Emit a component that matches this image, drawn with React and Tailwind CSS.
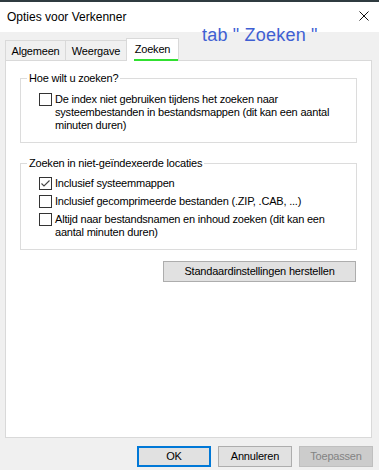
import React from "react";

function Box({ checked }) {
  return (
    <span className="relative w-[13px] h-[13px] shrink-0 border border-[#333333] bg-white flex items-center justify-center">
      {checked && (
        <svg width="11" height="11" viewBox="0 0 11 11" className="block">
          <polyline points="1.5,5.5 4,8 9.5,2.5" fill="none" stroke="#444444" strokeWidth="1.1" />
        </svg>
      )}
    </span>
  );
}

function Row({ checked, lines }) {
  return (
    <div className="flex items-start">
      <Box checked={checked} />
      <div className="ml-[3px] leading-[13px] whitespace-nowrap">
        {lines.map((l, i) => (
          <div key={i}>{l}</div>
        ))}
      </div>
    </div>
  );
}

export default function App() {
  return (
    <div className="relative w-[379px] h-[470px] bg-[#f0f0f0] overflow-hidden font-['Liberation_Sans',Arial,sans-serif] text-[11px] tracking-[-0.2px] text-black flex flex-col">
      <div className="h-[2px] bg-[#2f3b40] shrink-0" />
      <div className="h-[30px] bg-white flex items-center justify-between pl-[7px] pr-[10px] shrink-0">
        <span className="text-[12px] leading-none tracking-normal">Opties voor Verkenner</span>
        <svg width="10" height="10" viewBox="0 0 10 10" className="block -mt-[2px]">
          <path d="M0.5 0.5 L9.5 9.5 M9.5 0.5 L0.5 9.5" stroke="#111" strokeWidth="1" fill="none" />
        </svg>
      </div>

      <div className="absolute left-[202px] top-[26px] text-[18px] leading-[18px] tracking-[0.2px] text-[#3f5fd3] whitespace-nowrap">
        tab " Zoeken "
      </div>

      <div className="mt-[6px] px-[5px] flex items-end h-[22px] shrink-0">
        <div className="w-[61px] h-[20px] border-l border-t border-r border-[#d9d9d9] bg-[#f0f0f0] flex items-center justify-center leading-none pt-[1px]">
          Algemeen
        </div>
        <div className="w-[61px] h-[20px] border-t border-r border-[#d9d9d9] bg-[#f0f0f0] flex items-center justify-center leading-none pt-[1px]">
          Weergave
        </div>
        <div className="relative z-10 -ml-[1px] -mb-[1px] w-[53px] h-[23px] border-l border-t border-r border-[#d9d9d9] bg-white flex items-start justify-center leading-none pt-[5px]">
          Zoeken
          <div className="absolute left-[7px] top-[20px] w-[44px] h-[2px] bg-[#30e030]" />
        </div>
      </div>

      <div className="ml-[5px] mr-[7px] h-[378px] border border-[#d9d9d9] bg-white shrink-0 flex flex-col">
        <fieldset className="mt-[11px] mx-[14px] border border-[#dcdcdc] p-0 pb-[10px]">
          <legend className="ml-[6px] px-[2px] leading-[13px]">Hoe wilt u zoeken?</legend>
          <div className="pt-[8px] pl-[18px]">
            <Row
              lines={[
                "De index niet gebruiken tijdens het zoeken naar",
                "systeembestanden in bestandsmappen (dit kan een aantal",
                "minuten duren)",
              ]}
            />
          </div>
        </fieldset>

        <fieldset className="mt-[14px] mx-[14px] border border-[#dcdcdc] p-0 pb-[10px]">
          <legend className="ml-[6px] px-[2px] leading-[13px]">Zoeken in niet-geïndexeerde locaties</legend>
          <div className="pt-[7px] pl-[18px] flex flex-col gap-[5px]">
            <Row checked lines={["Inclusief systeemmappen"]} />
            <Row lines={["Inclusief gecomprimeerde bestanden (.ZIP, .CAB, ...)"]} />
            <Row
              lines={[
                "Altijd naar bestandsnamen en inhoud zoeken (dit kan een",
                "aantal minuten duren)",
              ]}
            />
          </div>
        </fieldset>

        <div className="mt-[11px] mr-[15px] flex justify-end">
          <button className="w-[193px] h-[21px] border border-[#adadad] bg-[#e1e1e1] text-[11px] leading-none">
            Standaardinstellingen herstellen
          </button>
        </div>
      </div>

      <div className="mt-[8px] pr-[6px] flex justify-end gap-[7px] shrink-0">
        <button className="w-[74px] h-[21px] border-2 border-[#0078d7] bg-[#e1e1e1] text-[11px] leading-none">
          OK
        </button>
        <button className="w-[74px] h-[21px] border border-[#adadad] bg-[#e1e1e1] text-[11px] leading-none">
          Annuleren
        </button>
        <button className="w-[74px] h-[21px] border border-[#bfbfbf] bg-[#cccccc] text-[11px] leading-none text-[#838383]">
          Toepassen
        </button>
      </div>
    </div>
  );
}
